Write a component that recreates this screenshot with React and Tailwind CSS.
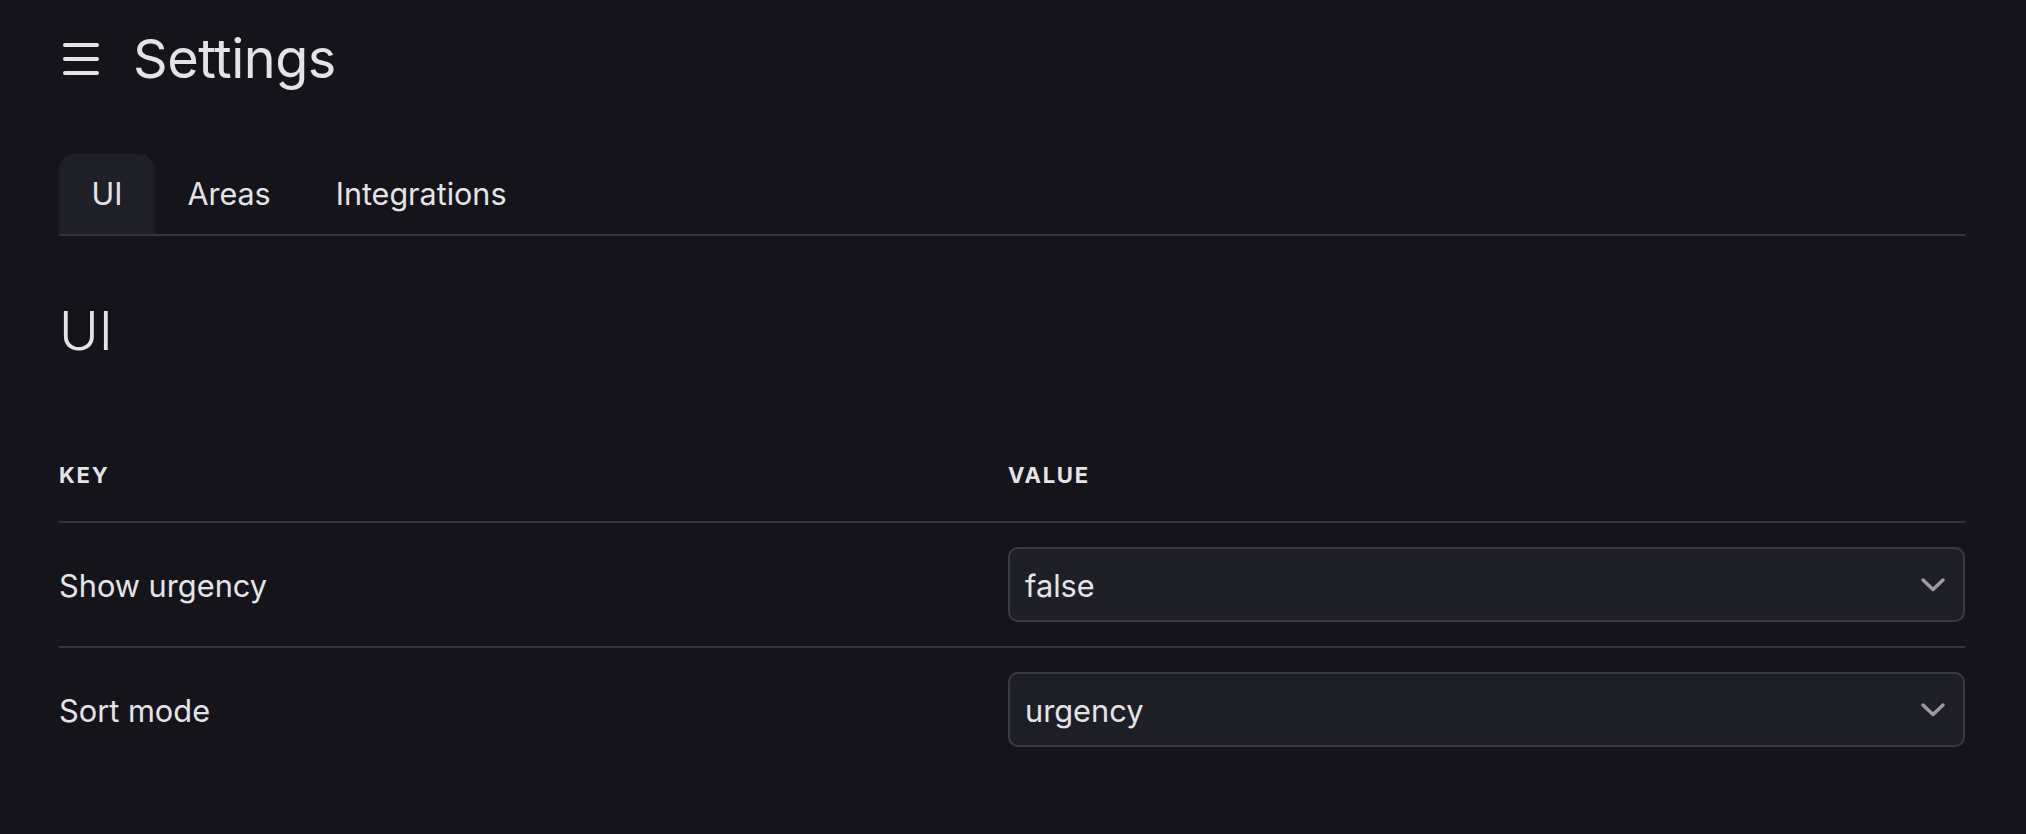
import { Menu } from 'lucide-react';

const rows = [
  { key: 'Show urgency', value: 'false' },
  { key: 'Sort mode', value: 'urgency' },
];

const tabs = ['UI', 'Areas', 'Integrations'];

const Chevron = () => (
  <svg width="26" height="16" viewBox="0 0 26 16" fill="none" className="shrink-0">
    <path d="M3 3 L13 12.5 L23 3" stroke="#9a99a6" strokeWidth="3.5" strokeLinecap="round" strokeLinejoin="round" />
  </svg>
);

const App = () => {
  return (
    <div
      className="min-h-screen w-full bg-[#14141a] text-[#e4e4e8] pl-[59px] pr-[61px] pt-[31px]"
      style={{ fontFamily: 'Inter, "Noto Sans", sans-serif' }}
    >
      {/* header */}
      <div className="flex items-center h-[55px]">
        <Menu className="w-12 h-12 -ml-[2px] text-[#e4e4e8]" strokeWidth={2} />
        <h1 className="ml-[28px] text-[54px] leading-none font-normal tracking-[-0.5px]">Settings</h1>
      </div>

      {/* tabs */}
      <div className="mt-[68px] flex border-b-2 border-[#33323f]">
        {tabs.map((t, i) => (
          <button
            key={t}
            className={`h-[80px] px-[32.5px] text-[30.5px] leading-none text-[#e4e4e8] rounded-t-[16px] ${
              i === 0 ? 'bg-[#1f1f28]' : ''
            }`}
          >
            {t}
          </button>
        ))}
      </div>

      <h2 className="mt-[68px] text-[54px] leading-none font-light">UI</h2>

      {/* table */}
      <div className="mt-[71px]">
        <div className="grid grid-cols-[949px_1fr] border-b-2 border-[#33323f] pt-[35px] pb-[35px]">
          <div className="text-[22px] leading-none font-bold tracking-[0.08em]">KEY</div>
          <div className="text-[22px] leading-none font-bold tracking-[0.08em]">VALUE</div>
        </div>
        {rows.map((r, i) => (
          <div
            key={r.key}
            className={`grid grid-cols-[949px_1fr] items-center py-[24px] ${
              i < rows.length - 1 ? 'border-b-2 border-[#33323f]' : ''
            }`}
          >
            <div className="text-[30.75px] leading-none pt-[3px]">{r.key}</div>
            <div className="h-[75px] flex items-center justify-between rounded-[10px] border-2 border-[#3a3948] bg-[#1e1e27] pl-[15px] pr-[17px]">
              <span className="text-[30.75px] leading-none pt-[3px]">{r.value}</span>
              <Chevron />
            </div>
          </div>
        ))}
      </div>
    </div>
  );
};

export default App;
